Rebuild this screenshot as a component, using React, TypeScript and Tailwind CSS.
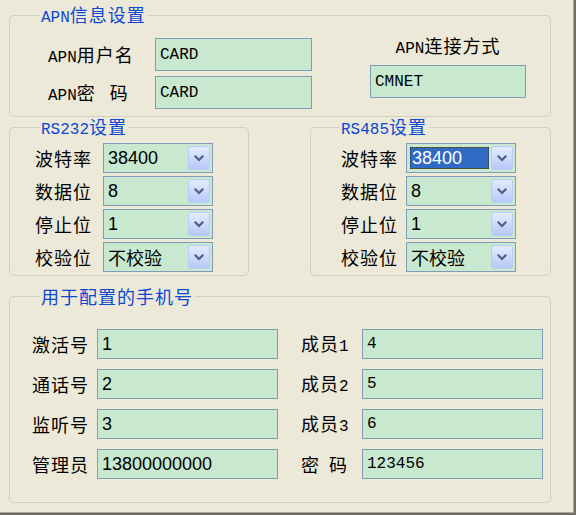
import React from "react";

const cjk = "font-['Noto_Sans_CJK_SC',sans-serif]";

function M({ children }: { children: React.ReactNode }) {
  return (
    <span className="font-['Liberation_Mono',monospace] text-[16px] tracking-normal leading-none">
      {children}
    </span>
  );
}

function Label({ w, children, className = "" }: { w: string; children: React.ReactNode; className?: string }) {
  return (
    <div
      className={`${w} shrink-0 ${cjk} text-[18px] tracking-[1px] leading-[20px] h-[20px] flex items-center whitespace-nowrap text-black ${className}`}
    >
      <span className="leading-[20px]">{children}</span>
    </div>
  );
}

function Input({
  w,
  h,
  value,
  mono,
}: {
  w: string;
  h: string;
  value: string;
  mono?: boolean;
}) {
  return (
    <div
      className={`${w} ${h} shrink-0 border border-[#7F9DB9] bg-[#C8E8CF] flex items-center pl-[4px] text-black ${
        mono
          ? "font-['Liberation_Mono',monospace] text-[16px]"
          : "font-['Liberation_Sans',Arial,sans-serif] text-[18px]"
      }`}
    >
      {value}
    </div>
  );
}

function Chevron() {
  return (
    <svg width="10" height="7" viewBox="0 0 10 7">
      <path d="M1.5 1.5 L5 5 L8.5 1.5" fill="none" stroke="#4D6185" strokeWidth="2.2" strokeLinecap="square" />
    </svg>
  );
}

function Combo({ value, selected }: { value: string; selected?: boolean }) {
  const isCjk = /[\u4e00-\u9fff]/.test(value);
  const font = isCjk
    ? `${cjk} text-[18px]`
    : "font-['Liberation_Sans',Arial,sans-serif] text-[18px]";
  return (
    <div className="w-[110px] h-[30px] shrink-0 border border-[#7F9DB9] bg-[#C8E8CF] flex p-[2px]">
      <div className="flex-1 flex items-stretch min-w-0">
        {selected ? (
          <div
            className={`flex-1 m-[1px] mr-[2px] bg-[#316AC5] text-white flex items-center pl-[2px] outline-1 outline-dotted outline-[#3A3A20] -outline-offset-1 ${font}`}
          >
            {value}
          </div>
        ) : (
          <div className={`flex-1 flex items-center pl-[2px] text-black ${font}`}>{value}</div>
        )}
      </div>
      <div className="w-[22px] shrink-0 rounded-[3px] border border-[#BACCF5] bg-gradient-to-b from-[#E3EBFE] to-[#B6C9F7] flex items-center justify-center">
        <Chevron />
      </div>
    </div>
  );
}

function Legend({ ml, children }: { ml: string; children: React.ReactNode }) {
  return (
    <legend
      className={`${ml} px-[2px] h-[20px] ${cjk} text-[18px] tracking-[1px] leading-[20px] text-[#0F48D2] whitespace-nowrap`}
    >
      <div className="h-[20px] flex items-center">
        <span className="leading-[20px]">{children}</span>
      </div>
    </legend>
  );
}

function SerialGroup({
  title,
  w,
  ml,
  pl,
  labelW,
  selectedFirst,
}: {
  title: string;
  w: string;
  ml: string;
  pl: string;
  labelW: string;
  selectedFirst?: boolean;
}) {
  const rows: [string, string][] = [
    ["波特率", "38400"],
    ["数据位", "8"],
    ["停止位", "1"],
    ["校验位", "不校验"],
  ];
  return (
    <fieldset className={`${w} border border-[#D0D0BF] rounded-[5px]`}>
      <Legend ml={ml}>
        <M>{title}</M>设置
      </Legend>
      <div className={`flex flex-col gap-[3px] pt-[6px] pb-[3px] ${pl}`}>
        {rows.map(([l, v], i) => (
          <div key={l} className="flex items-center">
            <Label w={labelW}>{l}</Label>
            <Combo value={v} selected={selectedFirst && i === 0} />
          </div>
        ))}
      </div>
    </fieldset>
  );
}

export default function App() {
  const phones: [React.ReactNode, string, React.ReactNode, string][] = [
    ["激活号", "1", <>成员<M>1</M></>, "4"],
    ["通话号", "2", <>成员<M>2</M></>, "5"],
    ["监听号", "3", <>成员<M>3</M></>, "6"],
    ["管理员", "13800000000", <>密<span className="inline-block w-[9px]" />码</>, "123456"],
  ];
  return (
    <div className="w-[576px] h-[515px] bg-[#ECE9D8] border-r-2 border-b-2 border-[#716F64] overflow-hidden">
      <div className="h-full border-r border-b border-[#ACA899] pt-[5px] pl-[9px]">
        {/* APN group */}
        <fieldset className="w-[542px] border border-[#D0D0BF] rounded-[5px]">
          <Legend ml="ml-[29px]">
            <M>APN</M>信息设置
          </Legend>
          <div className="flex pt-[13px] pb-[7px]">
            <div className="flex flex-col gap-[5px] pl-[38px]">
              <div className="flex items-center">
                <Label w="w-[107px]">
                  <M>APN</M>用户名
                </Label>
                <Input w="w-[157px]" h="h-[33px]" value="CARD" mono />
              </div>
              <div className="flex items-center">
                <Label w="w-[107px]">
                  <M>APN</M>密<span className="inline-block w-[14px]" />码
                </Label>
                <Input w="w-[157px]" h="h-[33px]" value="CARD" mono />
              </div>
            </div>
            <div className="ml-[58px] -mt-[2px] flex flex-col items-center">
              <Label w="" className="justify-center">
                <M>APN</M>连接方式
              </Label>
              <div className="mt-[9px]">
                <Input w="w-[156px]" h="h-[33px]" value="CMNET" mono />
              </div>
            </div>
          </div>
        </fieldset>

        {/* Serial groups */}
        <div className="flex gap-[61px]">
          <SerialGroup title="RS232" w="w-[240px]" ml="ml-[29px]" pl="pl-[25px]" labelW="w-[68px]" />
          <SerialGroup
            title="RS485"
            w="w-[241px]"
            ml="ml-[28px]"
            pl="pl-[30px]"
            labelW="w-[65px]"
            selectedFirst
          />
        </div>

        {/* Phone group */}
        <fieldset className="mt-[10px] w-[542px] border border-[#D0D0BF] rounded-[5px]">
          <Legend ml="ml-[29px]">用于配置的手机号</Legend>
          <div className="flex flex-col gap-[10px] pt-[23px] pb-[23px] pl-[22px]">
            {phones.map(([l1, v1, l2, v2], i) => (
              <div key={i} className="flex items-center">
                <Label w="w-[65px]">{l1}</Label>
                <Input w="w-[181px]" h="h-[30px]" value={v1} />
                <Label w="w-[61px]" className="ml-[23px]">
                  {l2}
                </Label>
                <Input w="w-[181px]" h="h-[30px]" value={v2} mono />
              </div>
            ))}
          </div>
        </fieldset>
      </div>
    </div>
  );
}
